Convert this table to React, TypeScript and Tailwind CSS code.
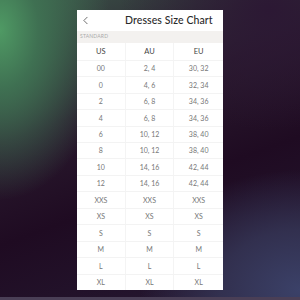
import { ChevronLeft } from 'lucide-react';

const rows: [string, string, string][] = [
  ['00', '2, 4', '30, 32'],
  ['0', '4, 6', '32, 34'],
  ['2', '6, 8', '34, 36'],
  ['4', '6, 8', '34, 36'],
  ['6', '10, 12', '38, 40'],
  ['8', '10, 12', '38, 40'],
  ['10', '14, 16', '42, 44'],
  ['12', '14, 16', '42, 44'],
  ['XXS', 'XXS', 'XXS'],
  ['XS', 'XS', 'XS'],
  ['S', 'S', 'S'],
  ['M', 'M', 'M'],
  ['L', 'L', 'L'],
  ['XL', 'XL', 'XL'],
];

export default function App() {
  return (
    <div className="flex h-[300px] w-[300px] flex-col items-center overflow-hidden bg-[radial-gradient(ellipse_110px_170px_at_0px_30px,#4f9a64_0%,#3f7052_35%,transparent_100%),radial-gradient(ellipse_160px_120px_at_300px_290px,#3b4168_0%,#32304f_50%,transparent_100%),radial-gradient(ellipse_150px_120px_at_270px_10px,#2c1834_0%,transparent_100%),linear-gradient(160deg,#3b5448_0%,#2a1a2e_35%,#1f0b22_60%,#261a33_100%)] pt-[10px] font-['Lato',sans-serif]">
      <div className="flex h-[280px] w-[146px] flex-col bg-white">
        <div className="flex h-[21px] items-center">
          <ChevronLeft className="ml-[2px] h-[13px] w-[13px] text-[#333]" strokeWidth={1.3} />
          <span className="ml-[33px] text-[10.5px] font-medium tracking-[0.1px] text-[#2a2a2a]">Dresses Size Chart</span>
        </div>
        <div className="flex h-[12px] items-center bg-[#f3f1ef] pl-[3px] text-[5px] tracking-[0.2px] text-[#aaa]">
          STANDARD
        </div>
        <div className="grid h-[17px] grid-cols-3 items-center text-center text-[7.5px] text-[#444]">
          <div className="flex h-full items-center justify-center border-r border-[#f4f4f4]">US</div>
          <div className="flex h-full items-center justify-center border-r border-[#f4f4f4]">AU</div>
          <div>EU</div>
        </div>
        {rows.map((r, i) => (
          <div key={i} className="grid h-[16.5px] grid-cols-3 border-t border-[#f3f3f3] text-center text-[7px] text-[#777]">
            <div className="flex items-center justify-center border-r border-[#f4f4f4]">{r[0]}</div>
            <div className="flex items-center justify-center border-r border-[#f4f4f4]">{r[1]}</div>
            <div className="flex items-center justify-center">{r[2]}</div>
          </div>
        ))}
      </div>
      <div className="flex-1" />
      <div className="h-[3px] w-full bg-[#4a3f56]" />
    </div>
  );
}
